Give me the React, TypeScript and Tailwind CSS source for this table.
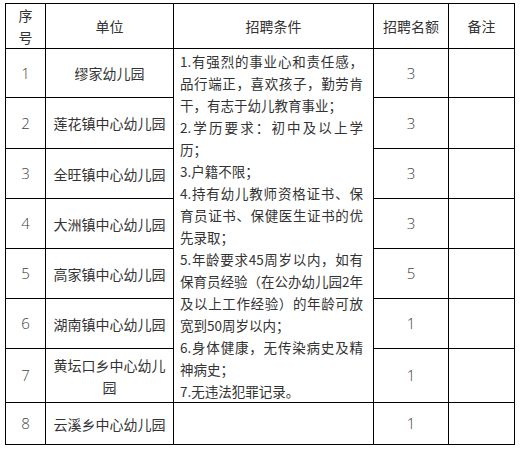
import React from 'react';

// 幼儿园招聘表 — rebuilt from screenshot
const units = [
  { no: '1', name: ['缪家幼儿园'], count: '3' },
  { no: '2', name: ['莲花镇中心幼儿园'], count: '3' },
  { no: '3', name: ['全旺镇中心幼儿园'], count: '3' },
  { no: '4', name: ['大洲镇中心幼儿园'], count: '3' },
  { no: '5', name: ['高家镇中心幼儿园'], count: '5' },
  { no: '6', name: ['湖南镇中心幼儿园'], count: '1' },
  { no: '7', name: ['黄坛口乡中心幼儿', '园'], count: '1' },
];

// [text, fill the line?]
const criteria: [string, boolean][] = [
  ['1.有强烈的事业心和责任感，', true],
  ['品行端正，喜欢孩子，勤劳肯', true],
  ['干，有志于幼儿教育事业；', false],
  ['2.学历要求：初中及以上学', true],
  ['历；', false],
  ['3.户籍不限；', false],
  ['4.持有幼儿教师资格证书、保', true],
  ['育员证书、保健医生证书的优', true],
  ['先录取；', false],
  ['5.年龄要求45周岁以内，如有', true],
  ['保育员经验（在公办幼儿园2年', true],
  ['及以上工作经验）的年龄可放', true],
  ['宽到50周岁以内；', false],
  ['6.身体健康，无传染病史及精', true],
  ['神病史；', false],
  ['7.无违法犯罪记录。', false],
];

const cell = 'bg-white flex flex-col items-center justify-center text-center';
const cjk = "font-['Noto_Sans_CJK_SC',sans-serif] text-[14px] leading-[22px] text-[#333]";
const num = "font-['Open_Sans','Noto_Sans_CJK_SC',sans-serif] font-light text-[15px] text-[#444]";

const App: React.FC = () => {
  return (
    <div className="w-[526px] h-[449px] bg-white pt-[3px] pl-[5px]">
      <div className="w-[510px] h-[442px] bg-black p-px grid gap-px grid-cols-[39px_127px_199px_74px_65px] grid-rows-[44px_48px_50px_49px_49px_49px_49px_53px_41px]">
        {/* header */}
        <div className={`${cell} ${cjk}`}>
          <span>序</span>
          <span>号</span>
        </div>
        <div className={`${cell} ${cjk}`}>单位</div>
        <div className={`${cell} ${cjk}`}>招聘条件</div>
        <div className={`${cell} ${cjk}`}>招聘名额</div>
        <div className={`${cell} ${cjk}`}>备注</div>

        {/* shared requirements cell */}
        <div className="bg-white col-start-3 row-start-2 row-span-7 flex flex-col justify-center pl-[6px] pr-[10px]">
          {criteria.map(([text, fill], i) => (
            <div
              key={i}
              className={`font-['Noto_Sans_CJK_SC',sans-serif] text-[13.5px] leading-[22px] text-[#333] whitespace-nowrap ${
                fill ? 'text-justify [text-align-last:justify]' : 'text-left'
              }`}
            >
              {text}
            </div>
          ))}
        </div>

        {units.map((u, i) => (
          <React.Fragment key={u.no}>
            <div className={`${cell} ${num} col-start-1`} style={{ gridRowStart: i + 2 }}>
              {u.no}
            </div>
            <div className={`${cell} ${cjk} col-start-2`} style={{ gridRowStart: i + 2 }}>
              {u.name.map((n) => (
                <span key={n}>{n}</span>
              ))}
            </div>
            <div className={`${cell} ${num} col-start-4`} style={{ gridRowStart: i + 2 }}>
              {u.count}
            </div>
            <div className={`${cell} col-start-5`} style={{ gridRowStart: i + 2 }} />
          </React.Fragment>
        ))}

        {/* row 8 */}
        <div className={`${cell} ${num}`}>8</div>
        <div className={`${cell} ${cjk}`}>云溪乡中心幼儿园</div>
        <div className={cell} />
        <div className={`${cell} ${num}`}>1</div>
        <div className={cell} />
      </div>
    </div>
  );
};

export default App;
